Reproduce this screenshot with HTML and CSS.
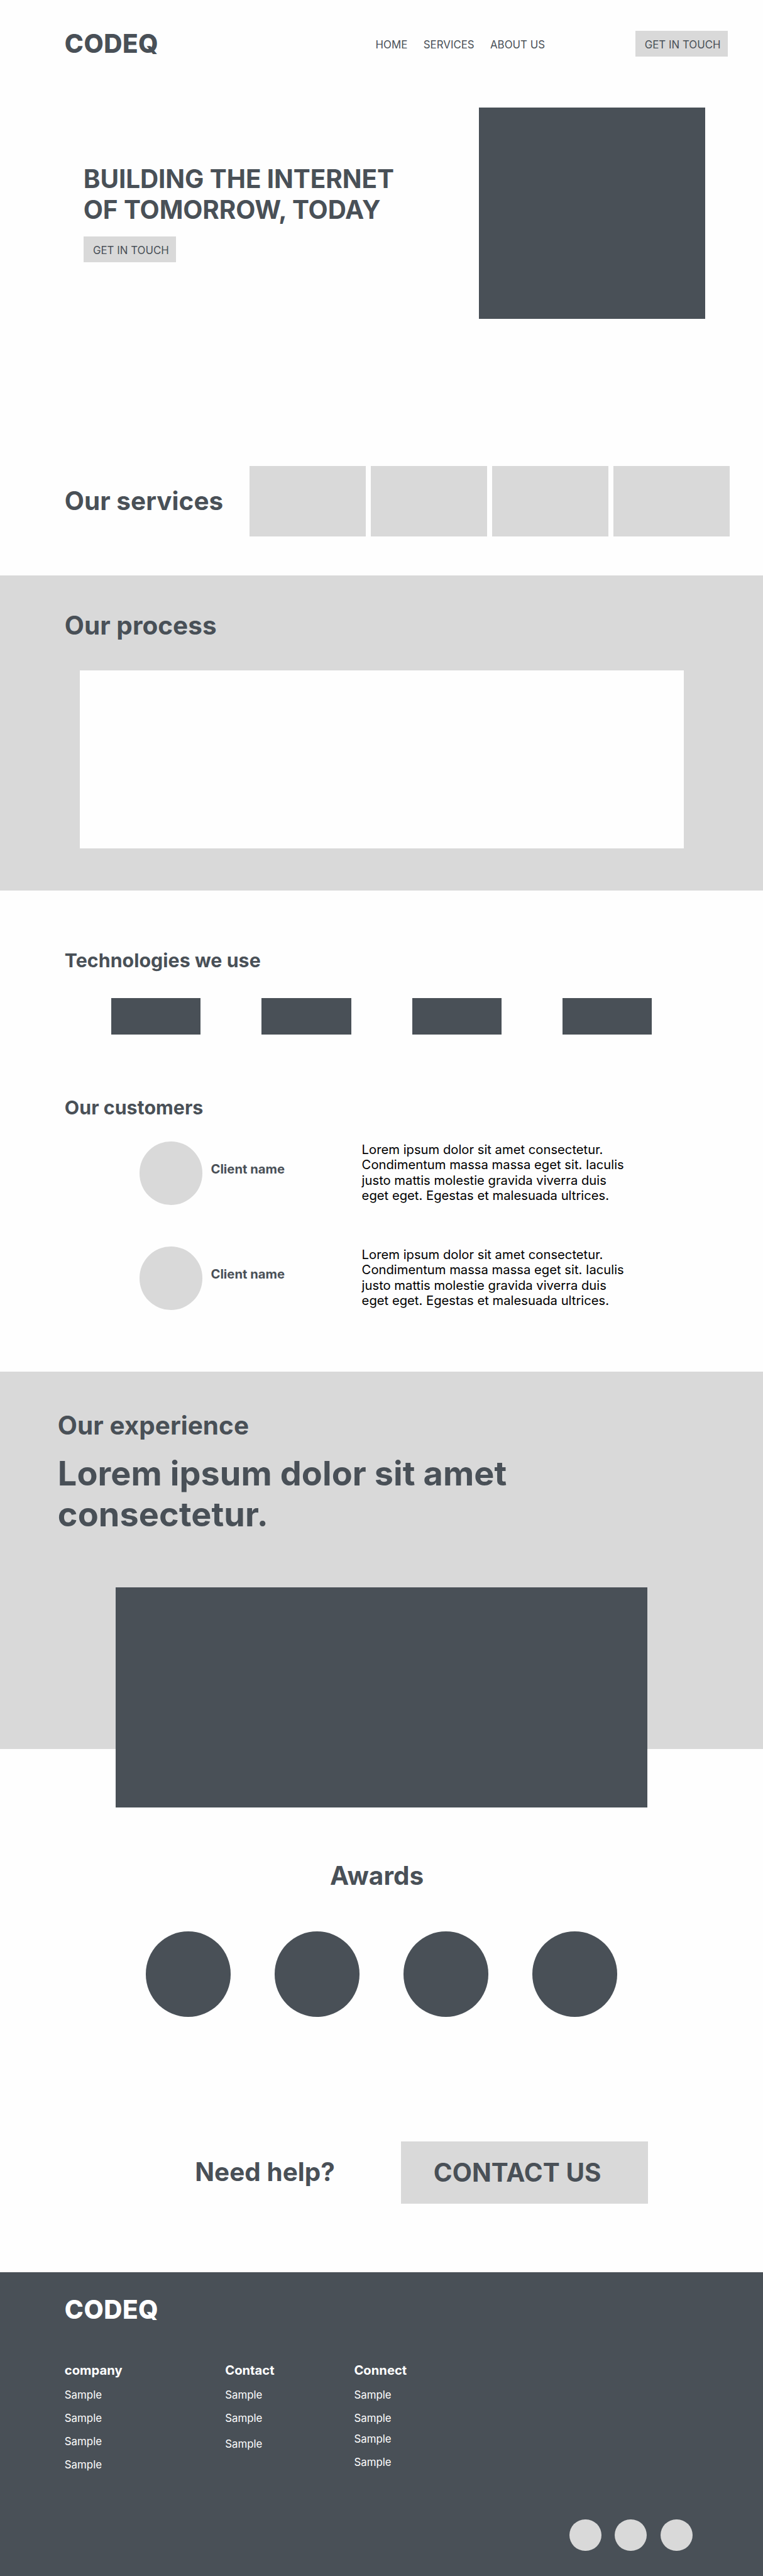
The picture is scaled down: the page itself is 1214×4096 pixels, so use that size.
FILE: index.html
```html
<!DOCTYPE html>
<html lang="en">
<head>
<meta charset="utf-8">
<title>CODEQ</title>
<link rel="stylesheet" href="styles.css">
</head>
<body>
<header class="header">
  <div class="logo">CODEQ</div>
  <nav class="nav">
    <a class="nav-home">HOME</a>
    <a class="nav-services">SERVICES</a>
    <a>ABOUT US</a>
  </nav>
  <a class="button">GET IN TOUCH</a>
</header>

<section class="hero">
  <div class="hero-text">
    <h1 class="heading hero-title">BUILDING THE INTERNET<br>OF TOMORROW, TODAY</h1>
    <a class="button">GET IN TOUCH</a>
  </div>
  <div class="hero-image"></div>
</section>

<section class="services">
  <h2 class="heading">Our services</h2>
  <div class="service-cards">
    <div class="service-card"></div>
    <div class="service-card"></div>
    <div class="service-card"></div>
    <div class="service-card"></div>
  </div>
</section>

<section class="process">
  <h2 class="heading">Our process</h2>
  <div class="process-panel"></div>
</section>

<section class="technologies">
  <h3 class="subheading">Technologies we use</h3>
  <div class="tech-list">
    <div class="tech"></div>
    <div class="tech"></div>
    <div class="tech"></div>
    <div class="tech"></div>
  </div>
</section>

<section class="customers">
  <h3 class="subheading customers-title">Our customers</h3>
  <article class="customer">
    <div class="avatar"></div>
    <h4 class="client">Client name</h4>
    <p class="quote">Lorem ipsum dolor sit amet consectetur.<br>Condimentum massa massa eget sit. Iaculis<br>justo mattis molestie gravida viverra duis<br>eget eget. Egestas et malesuada ultrices.</p>
  </article>
  <article class="customer">
    <div class="avatar"></div>
    <h4 class="client">Client name</h4>
    <p class="quote">Lorem ipsum dolor sit amet consectetur.<br>Condimentum massa massa eget sit. Iaculis<br>justo mattis molestie gravida viverra duis<br>eget eget. Egestas et malesuada ultrices.</p>
  </article>
</section>

<section class="experience">
  <h2 class="heading">Our experience</h2>
  <p class="lead">Lorem ipsum dolor sit amet<br>consectetur.</p>
  <div class="experience-image"></div>
</section>

<section class="awards">
  <h2 class="heading awards-title">Awards</h2>
  <div class="award-list">
    <div class="award"></div>
    <div class="award"></div>
    <div class="award"></div>
    <div class="award"></div>
  </div>
</section>

<section class="help">
  <h2 class="heading">Need help?</h2>
  <a class="heading contact-button">CONTACT US</a>
</section>

<footer class="footer">
  <div class="logo">CODEQ</div>
  <div class="footer-columns">
    <div class="footer-column">
      <h4 class="footer-title">company</h4>
      <a>Sample</a><a>Sample</a><a>Sample</a><a>Sample</a>
    </div>
    <div class="footer-column contact-column">
      <h4 class="footer-title">Contact</h4>
      <a>Sample</a><a>Sample</a><a>Sample</a>
    </div>
    <div class="footer-column connect-column">
      <h4 class="footer-title">Connect</h4>
      <a>Sample</a><a>Sample</a><a>Sample</a><a>Sample</a>
    </div>
  </div>
  <div class="socials">
    <div class="social"></div>
    <div class="social"></div>
    <div class="social"></div>
  </div>
</footer>
</body>
</html>
```

FILE: styles.css
```css
:root {
  --slate: #495057;
  --grey: #d9d9d9;
}

* {
  box-sizing: border-box;
  margin: 0;
  padding: 0;
}

html {
  font-size: 8.428px;
}

body {
  background: #fefefe;
  color: var(--slate);
  font-family: Inter, "Liberation Sans", sans-serif;
  font-size: 2rem;
  font-weight: 400;
  line-height: 2.42rem;
  white-space: nowrap;
}

.heading {
  font-size: 4.8rem;
  font-weight: 700;
  letter-spacing: 0.005rem;
  line-height: 5.8rem;
}

.subheading {
  font-size: 3.6rem;
  font-weight: 700;
  letter-spacing: 0.005rem;
  line-height: 4.36rem;
}

.logo {
  padding-top: 0.15rem;
  font-size: 4.8rem;
  font-weight: 800;
  letter-spacing: 0.06rem;
  line-height: 5.8rem;
}

.button {
  display: block;
  width: 17.45rem;
  height: 4.85rem;
  padding: 1.36rem 0 0 1.8rem;
  background: var(--grey);
}

/* Header */
.header {
  display: grid;
  grid-template-columns: 58.7rem 49rem auto;
  align-items: center;
  justify-content: start;
  height: 11.2rem;
  padding: 5.3rem 0 0 12.2rem;
}

.nav {
  display: flex;
  padding-top: 0.35rem;
}

.nav-home {
  width: 9.05rem;
}

.nav-services {
  width: 12.6rem;
}

/* Hero */
.hero {
  display: flex;
  justify-content: space-between;
  margin-top: 9.04rem;
  padding: 0 10.95rem 0 15.75rem;
}

.hero-title {
  margin-bottom: 2.1rem;
  letter-spacing: -0.01rem;
}

.hero-text {
  padding-top: 10.7rem;
}

.hero-image {
  width: 42.7rem;
  height: 39.9rem;
  background: var(--slate);
}

/* Services */
.services {
  display: flex;
  align-items: center;
  justify-content: space-between;
  margin-top: 27.8rem;
  padding: 0 6.25rem 0 12.2rem;
}

.service-cards {
  display: flex;
  gap: 0.93rem;
}

.service-card {
  width: 21.98rem;
  height: 13.3rem;
  background: var(--grey);
}

/* Process */
.process {
  height: 59.5rem;
  margin-top: 7.3rem;
  padding: 6.65rem 12.2rem 0;
  background: var(--grey);
}

.process-panel {
  width: 114rem;
  height: 33.55rem;
  margin: 5.5rem 0 0 2.85rem;
  background: #fefefe;
}

/* Technologies */
.technologies {
  padding: 11rem 12.2rem 0;
}

.tech-list {
  display: flex;
  gap: 11.5rem;
  margin: 4.95rem 0 0 8.8rem;
}

.tech {
  width: 16.9rem;
  height: 6.8rem;
  background: var(--slate);
}

/* Customers */
.customers {
  padding-top: 11.7rem;
}

.customers-title {
  padding-left: 12.2rem;
  margin-bottom: 4.2rem;
}

.customer {
  display: grid;
  grid-template-columns: 13.5rem 28.5rem auto;
  justify-content: start;
  height: 11.9rem;
  margin-bottom: 7.9rem;
  padding-left: 26.3rem;
}

.avatar {
  width: 11.9rem;
  height: 11.9rem;
  border-radius: 50%;
  background: var(--grey);
}

.client {
  padding-top: 3.75rem;
  font-size: 2.4rem;
  font-weight: 700;
  line-height: 2.9rem;
}

.quote {
  padding-top: 0.05rem;
  color: #000;
  font-size: 2.4rem;
  line-height: 2.9rem;
}

/* Experience: the image hangs over the section's lower edge */
.experience {
  height: 71.2rem;
  margin-top: 11.7rem;
  padding: 7.3rem 10.9rem 0;
  background: var(--grey);
}

.lead {
  margin-top: 2.35rem;
  font-size: 6.4rem;
  font-weight: 700;
  letter-spacing: 0.012rem;
  line-height: 7.7rem;
}

.experience-image {
  width: 100.3rem;
  height: 41.5rem;
  margin: 9.85rem 0 0 10.97rem;
  background: var(--slate);
}

/* Awards */
.awards {
  padding-top: 21.1rem;
}

.awards-title {
  padding-left: 62.3rem;
}

.award-list {
  display: flex;
  gap: 8.22rem;
  margin: 7.53rem 0 0 27.5rem;
}

.award {
  width: 16.1rem;
  height: 16.1rem;
  border-radius: 50%;
  background: var(--slate);
}

/* Help */
.help {
  display: flex;
  align-items: center;
  justify-content: space-between;
  margin-top: 23.5rem;
  padding: 0 21.75rem 0 36.8rem;
}

.contact-button {
  width: 46.65rem;
  height: 11.75rem;
  padding: 3.05rem 0 0 6.2rem;
  background: var(--grey);
}

/* Footer */
.footer {
  height: 57.3rem;
  margin-top: 12.97rem;
  padding: 4.1rem 12.2rem 0;
  background: var(--slate);
  color: #fff;
}

.footer-columns {
  display: flex;
  height: 26.6rem;
  margin-top: 6.95rem;
}

.footer-column {
  display: flex;
  flex-direction: column;
  gap: 1.98rem;
  width: 30.3rem;
}

.contact-column {
  width: 24.35rem;
}

.contact-column a:last-child {
  margin-top: 0.55rem;
}

.connect-column a:nth-of-type(3) {
  margin-top: -0.5rem;
}

.footer-title {
  font-size: 2.4rem;
  font-weight: 700;
  line-height: 2.9rem;
}

.socials {
  display: flex;
  gap: 2.6rem;
  margin: 2.95rem 0 0 95.3rem;
}

.social {
  width: 6rem;
  height: 6rem;
  border-radius: 50%;
  background: var(--grey);
}
```
